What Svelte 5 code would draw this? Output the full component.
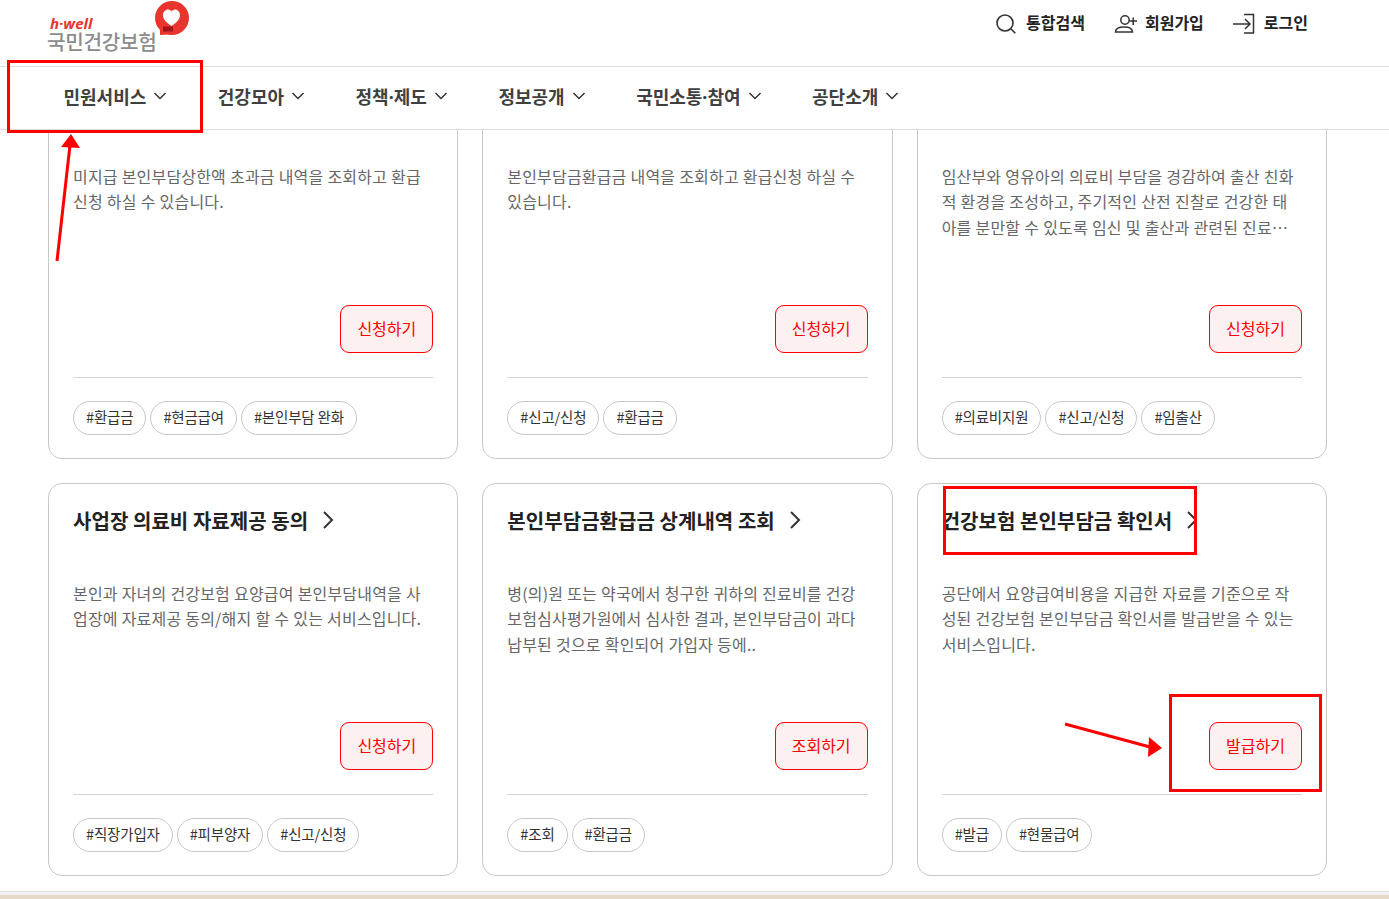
<script>
  const menus = ['민원서비스', '건강모아', '정책·제도', '정보공개', '국민소통·참여', '공단소개'];

  const cards = [
    { title: '', desc: '미지급 본인부담상한액 초과금 내역을 조회하고 환급신청 하실 수 있습니다.', action: '신청하기', tags: ['#환급금', '#현금급여', '#본인부담 완화'] },
    { title: '', desc: '본인부담금환급금 내역을 조회하고 환급신청 하실 수 있습니다.', action: '신청하기', tags: ['#신고/신청', '#환급금'] },
    { title: '', desc: '임산부와 영유아의 의료비 부담을 경감하여 출산 친화적 환경을 조성하고, 주기적인 산전 진찰로 건강한 태아를 분만할 수 있도록 임신 및 출산과 관련된 진료…', action: '신청하기', tags: ['#의료비지원', '#신고/신청', '#임출산'] },
    { title: '사업장 의료비 자료제공 동의', desc: '본인과 자녀의 건강보험 요양급여 본인부담내역을 사업장에 자료제공 동의/해지 할 수 있는 서비스입니다.', action: '신청하기', tags: ['#직장가입자', '#피부양자', '#신고/신청'] },
    { title: '본인부담금환급금 상계내역 조회', desc: '병(의)원 또는 약국에서 청구한 귀하의 진료비를 건강보험심사평가원에서 심사한 결과, 본인부담금이 과다 납부된 것으로 확인되어 가입자 등에..', action: '조회하기', tags: ['#조회', '#환급금'] },
    { title: '건강보험 본인부담금 확인서', desc: '공단에서 요양급여비용을 지급한 자료를 기준으로 작성된 건강보험 본인부담금 확인서를 발급받을 수 있는 서비스입니다.', action: '발급하기', tags: ['#발급', '#현물급여'] }
  ];
</script>

<div class="page">
  <header class="top">
    <div class="logo">
      <div class="logo-text">
        <span class="hwell">h·well</span>
        <span class="logo-name">국민건강보험</span>
      </div>
      <svg class="logo-heart" width="36" height="36" viewBox="0 0 36 36">
        <circle cx="17" cy="17" r="17" fill="#e8352e" />
        <path d="M5 34L5 24 21 33z" fill="#e8352e" />
        <path d="M16.500 25C11.500 21.500 8 18.500 8 14c0-3 2.500-5.500 5-5.500 1.500 0 2.800.7 3.500 2 .7-1.300 2-2 3.500-2 2.700 0 5 2.500 5 5.500 0 4.500-3.500 7.500-8.500 11z" fill="#fff" />
        <path d="M8 25.500h10v5H8z" fill="#a3141b" />
      </svg>
    </div>
    <div class="utils">
      <a class="util">
        <svg width="24" height="24" viewBox="0 -1 24 24" fill="none" stroke="#333" stroke-width="1.600"><circle cx="11" cy="12" r="8" /><path d="M16.800 17.800l4.500 4.500" /></svg>
        통합검색
      </a>
      <a class="util">
        <svg width="24" height="24" viewBox="0 -1 24 24" fill="none" stroke="#333" stroke-width="1.500"><circle cx="12" cy="9" r="4.200" /><path d="M2.500 21c0-3 3-5 8.500-5s8.500 2 8.500 5zM16.500 10h7.500M20.200 6.500v7.500" /></svg>
        회원가입
      </a>
      <a class="util">
        <svg width="24" height="24" viewBox="0 -1 24 24" fill="none" stroke="#333" stroke-width="1.500"><path d="M12 3.500h9.500v18.500H12M1 13h17M13 8l5 5-5 5" /></svg>
        로그인
      </a>
    </div>
  </header>

  <nav class="menu">
    {#each menus as menu}
      <a class="menu-item">
        {menu}
        <svg width="14" height="14" viewBox="0 0 14 14" fill="none" stroke="#333" stroke-width="1.500"><path d="M1.500 4l5.500 5.500L12.500 4" /></svg>
      </a>
    {/each}
  </nav>

  <main class="content">
    <div class="grid">
      {#each cards as card}
        <article class="card">
          <h3 class="card-title">
            {card.title}
            <svg width="14" height="20" viewBox="0 0 14 20" fill="none" stroke="#333" stroke-width="2"><path d="M3 2l8 8-8 8" /></svg>
          </h3>
          <p class="desc">{card.desc}</p>
          <div class="action-row">
            <button class="action">{card.action}</button>
          </div>
          <ul class="tags">
            {#each card.tags as tag}
              <li class="tag">{tag}</li>
            {/each}
          </ul>
        </article>
      {/each}
    </div>
  </main>
  <div class="footer-edge"></div>

  <div class="mark mark-menu"></div>
  <div class="mark mark-title"></div>
  <div class="mark mark-button"></div>
  <svg class="arrows" width="1389" height="899" viewBox="0 0 1389 899">
    <path d="M57 261L70 145" stroke="#f00" stroke-width="3" />
    <path d="M71 134L61 147 80 148z" fill="#f00" />
    <path d="M1065 724L1150 747" stroke="#f00" stroke-width="3" />
    <path d="M1162 748L1149 737 1148 757z" fill="#f00" />
  </svg>
</div>

<style>
  :global(body) {
    margin: 0;
    background: #fff;
  }
  .page {
    position: relative;
    width: 1389px;
    height: 899px;
    overflow: hidden;
    display: flex;
    flex-direction: column;
    font-family: "Noto Sans CJK KR", "Noto Sans", sans-serif;
    color: #333;
  }
  .top {
    height: 66px;
    flex: none;
    border-bottom: 1px solid #ddd;
    display: flex;
    justify-content: space-between;
    background: #fff;
    z-index: 2;
  }
  .logo {
    position: relative;
    margin-left: 47px;
  }
  .logo-text {
    display: flex;
    flex-direction: column;
    padding-top: 16px;
  }
  .hwell {
    color: #e8352e;
    font-family: "Open Sans", sans-serif;
    font-style: italic;
    font-weight: 700;
    font-size: 15px;
    line-height: 15px;
    margin-left: 3px;
  }
  .logo-name {
    color: #8c8c8c;
    font-size: 20.200px;
    font-weight: 500;
    line-height: 20px;
    margin-top: 1px;
    letter-spacing: -0.300px;
  }
  .logo-heart {
    position: absolute;
    left: 108px;
    top: 1px;
  }
  .utils {
    display: flex;
    gap: 28px;
    margin-right: 81px;
    padding-top: 10px;
    align-items: flex-start;
  }
  .util {
    display: flex;
    align-items: center;
    gap: 8px;
    font-size: 16px;
    font-weight: 700;
    line-height: 24px;
    color: #222;
  }
  .menu {
    height: 57px;
    padding-bottom: 5px;
    flex: none;
    border-bottom: 1px solid #ddd;
    display: flex;
    gap: 50.500px;
    align-items: center;
    padding-left: 63.500px;
    background: #fff;
    z-index: 2;
  }
  .menu-item {
    display: flex;
    align-items: center;
    gap: 7px;
    font-family: "Noto Sans", "Noto Sans CJK KR", sans-serif;
    font-size: 18px;
    font-weight: 700;
    color: #404040;
  }
  .content {
    flex: 1;
    min-height: 0;
    padding: 0 62px 0 48px;
  }
  .grid {
    display: grid;
    grid-template-columns: repeat(3, 1fr);
    gap: 24px;
    margin-top: -64px;
  }
  .card {
    height: 393px;
    box-sizing: border-box;
    border: 1px solid #c8c8c8;
    border-radius: 14px;
    padding: 24px 24px 0;
    background: #fff;
    display: flex;
    flex-direction: column;
  }
  .card-title {
    margin: 0;
    height: 24px;
    display: flex;
    align-items: center;
    gap: 13px;
    font-size: 20px;
    font-weight: 700;
    letter-spacing: 0.050px;
    color: #222;
    white-space: nowrap;
  }
  .desc {
    margin: 48.500px 0 0;
    height: 141.500px;
    font-size: 16px;
    line-height: 25.500px;
    color: #666;
    letter-spacing: 0.170px;
    word-spacing: 0.300px;
    word-break: break-all;
  }
  .action-row {
    display: flex;
    justify-content: flex-end;
    height: 72px;
    border-bottom: 1px solid #d4d4d4;
  }
  .action {
    width: 93px;
    height: 48px;
    box-sizing: border-box;
    border: 1px solid #f00;
    border-radius: 9px;
    background: #fdf0f0;
    color: #f00;
    font-family: inherit;
    font-size: 16px;
    padding: 0 0 2px;
  }
  .tags {
    list-style: none;
    margin: 23px 0 0;
    padding: 0;
    display: flex;
    gap: 4px;
  }
  .tag {
    height: 32px;
    border: 1px solid #c8c8c8;
    border-radius: 17px;
    padding: 0 12px;
    font-size: 14.500px;
    line-height: 30px;
    color: #333;
    letter-spacing: -0.170px;
    white-space: nowrap;
  }
  .footer-edge {
    position: absolute;
    left: 0;
    right: 0;
    bottom: 0;
    height: 8px;
    background: linear-gradient(#dcdcdc 0 1px, #f2f2f2 1px 4px, #e6d9c8 4px);
  }
  .mark {
    position: absolute;
    box-sizing: border-box;
    border: 3px solid #f00;
    z-index: 3;
  }
  .mark-menu {
    left: 7px;
    top: 60px;
    width: 196px;
    height: 73px;
  }
  .mark-title {
    left: 943px;
    top: 486px;
    width: 254px;
    height: 69px;
  }
  .mark-button {
    left: 1169px;
    top: 694px;
    width: 153px;
    height: 98px;
  }
  .arrows {
    position: absolute;
    left: 0;
    top: 0;
    z-index: 3;
    pointer-events: none;
  }
</style>
